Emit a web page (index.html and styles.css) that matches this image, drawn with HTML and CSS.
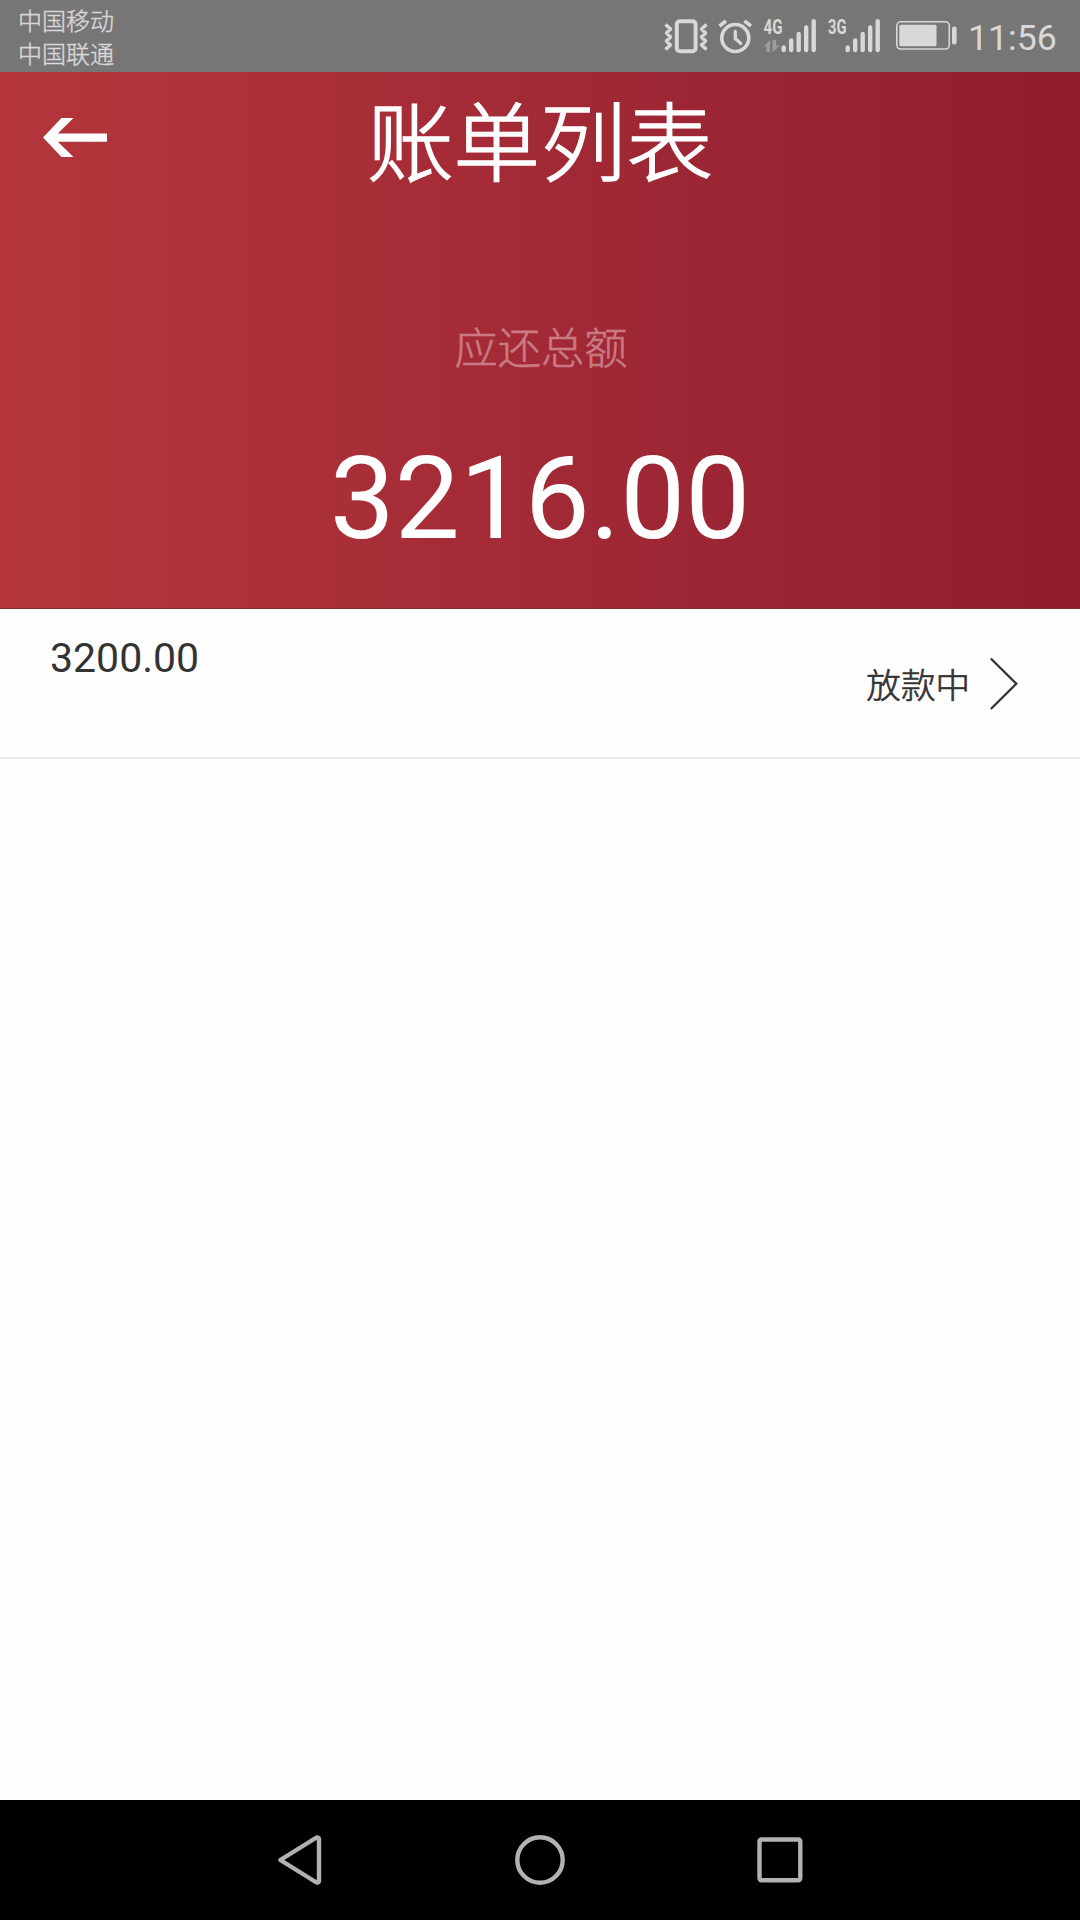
FILE: index.html
```html
<!DOCTYPE html>
<html lang="zh-CN">
<head>
<meta charset="utf-8">
<title>账单列表</title>
<link rel="stylesheet" href="styles.css">
</head>
<body>
<div class="status">
  <div class="carriers"><span>中国移动</span><span>中国联通</span></div>
  <div class="indicators">
    <svg class="vibrate" width="48" height="72" viewBox="662 0 48 72" fill="none" stroke="#d8d8d8">
      <rect x="676.8" y="21.3" width="18.8" height="30" rx="3" stroke-width="4"/>
      <path d="M665.500 24.500l5 4.500-4 4 4 4-4 4 4 4-5 4.500M706.500 24.500l-5 4.500 4 4-4 4 4 4-4 4 5 4.500" stroke-width="3.600" stroke-linejoin="round"/>
    </svg>
    <svg class="alarm" width="38" height="72" viewBox="716 0 38 72" fill="none" stroke="#d8d8d8">
      <circle cx="735.3" cy="38" r="13.500" stroke-width="3.600"/>
      <path d="M735.300 31.500v7l5.500 5" stroke-width="3.300" stroke-linecap="round" stroke-linejoin="round"/>
      <path d="M719.500 26l6.500-5M751 26l-6.500-5" stroke-width="3.600"/>
    </svg>
    <svg class="signal" width="56" height="72" viewBox="762 0 56 72">
      <text class="network" x="763.5" y="33.700" textLength="19" lengthAdjust="spacingAndGlyphs">4G</text>
      <path d="M763.500 46.500l6.500-6.500v12h-3.500v-5.500zM772.500 40h3.500v5.500h4l-7.500 6.500z" fill="#9c9c9c"/>
      <path d="M783.700 47.500v2.500M791.200 40.500v9.500M798.700 34v16M806.200 27.500v22.500M813.700 21.200v28.800" stroke="#d8d8d8" stroke-width="4.400" stroke-linecap="round"/>
    </svg>
    <svg class="signal second" width="56" height="72" viewBox="762 0 56 72">
      <text class="network" x="764" y="33.700" textLength="18.500" lengthAdjust="spacingAndGlyphs">3G</text>
      <path d="M783.700 47.500v2.500M791.200 40.500v9.500M798.700 34v16M806.200 27.500v22.500M813.700 21.200v28.800" stroke="#d8d8d8" stroke-width="4.400" stroke-linecap="round"/>
    </svg>
    <svg class="battery" width="64" height="72" viewBox="894 0 64 72">
      <rect x="896.8" y="21.800" width="52.500" height="27.200" rx="4" fill="none" stroke="#d8d8d8" stroke-width="1.600"/>
      <rect x="899.300" y="24.700" width="37.200" height="21.500" rx="1.500" fill="#d8d8d8"/>
      <rect x="952" y="26.500" width="4.600" height="18" rx="2" fill="#d8d8d8"/>
    </svg>
    <span class="clock">11:56</span>
  </div>
</div>
<header class="summary">
  <div class="titlebar">
    <svg class="back" width="64" height="39" viewBox="0 0 64 39"><path d="M0 19.500L18.500 0H30.500L14.800 15.500H64V23.800H14.800L30.500 39H18.500z" fill="#fff"/></svg>
    <h1>账单列表</h1>
  </div>
  <p class="label">应还总额</p>
  <p class="total">3216.00</p>
</header>
<main class="list">
  <div class="bill">
    <span class="amount">3200.00</span>
    <span class="state">放款中</span>
    <svg class="chevron" width="30" height="56" viewBox="0 0 30 56" fill="none" stroke="#333" stroke-width="2.300"><path d="M.8 3.500L26.300 28.700 .8 54"/></svg>
  </div>
</main>
<nav class="navbar">
  <svg width="1080" height="120" viewBox="0 0 1080 120" fill="none" stroke="#b2b2b2" stroke-width="4.400" stroke-linejoin="round">
    <path d="M280.300 60L316.500 37.500a1.800 1.800 0 0 1 2.500 1.500V81a1.800 1.800 0 0 1-2.500 1.500z"/>
    <circle cx="540" cy="60" r="22.700"/>
    <rect x="759.500" y="39.500" width="40.800" height="40.800" rx="2"/>
  </svg>
</nav>
</body>
</html>
```
FILE: styles.css
```css
* { box-sizing: border-box; }
body {
  margin: 0;
  width: 1080px;
  height: 1920px;
  display: flex;
  flex-direction: column;
  background: #fefefe;
  font-family: Roboto, "Noto Sans CJK SC", sans-serif;
  overflow: hidden;
}
svg { display: block; flex: none; }
h1, p { margin: 0; font-weight: 400; }

.status {
  height: 72px;
  display: flex;
  justify-content: space-between;
  background: #767676;
  color: #d8d8d8;
}
.carriers {
  display: flex;
  flex-direction: column;
  padding: 3px 0 0 18px;
  font: 300 24px/33px "Noto Sans CJK SC", sans-serif;
  -webkit-text-stroke: .4px #d8d8d8;
}
.indicators { display: flex; padding-right: 22px; }
.alarm { margin-left: 6px; }
.signal { margin-left: 8px; }
.battery { margin-left: 12px; }
.network { font: 700 20px Roboto, sans-serif; fill: #d8d8d8; }
.clock {
  width: 90px;
  margin-left: 10px;
  font-size: 35.700px;
  line-height: 76px;
  white-space: nowrap;
}

.summary {
  height: 537px;
  background: linear-gradient(90deg, #b4363c, #a22a36 50%, #901c2e);
  border-bottom: 1px solid #842c36;
  color: #fff;
  text-align: center;
}
.titlebar {
  height: 136px;
  display: grid;
  grid-template-columns: 150px 1fr 150px;
}
.back { margin: 46px 0 0 43px; }
h1 {
  font: 300 86.400px/131px "Noto Sans CJK SC", sans-serif;
  -webkit-text-stroke: 1.500px #fff;
}
.label {
  margin-top: 105px;
  padding-left: 2px;
  font: 300 43.200px/64px "Noto Sans CJK SC", sans-serif;
  color: #ca7a82;
  -webkit-text-stroke: .6px #ca7a82;
}
.total {
  margin-top: 54px;
  font-size: 115.700px;
  line-height: 136px;
}

.list { flex: 1; }
.bill {
  height: 150px;
  display: flex;
  align-items: center;
  padding: 0 60px 0 50px;
  border-bottom: 2px solid #ececec;
  color: #333;
}
.amount {
  flex: 1;
  align-self: flex-start;
  margin-top: 25px;
  font-size: 41px;
  line-height: 49px;
}
.state {
  margin-right: 20px;
  font: 300 34.560px/50px "Noto Sans CJK SC", sans-serif;
  -webkit-text-stroke: .7px #333;
}
.navbar { height: 120px; background: #000; }
```
